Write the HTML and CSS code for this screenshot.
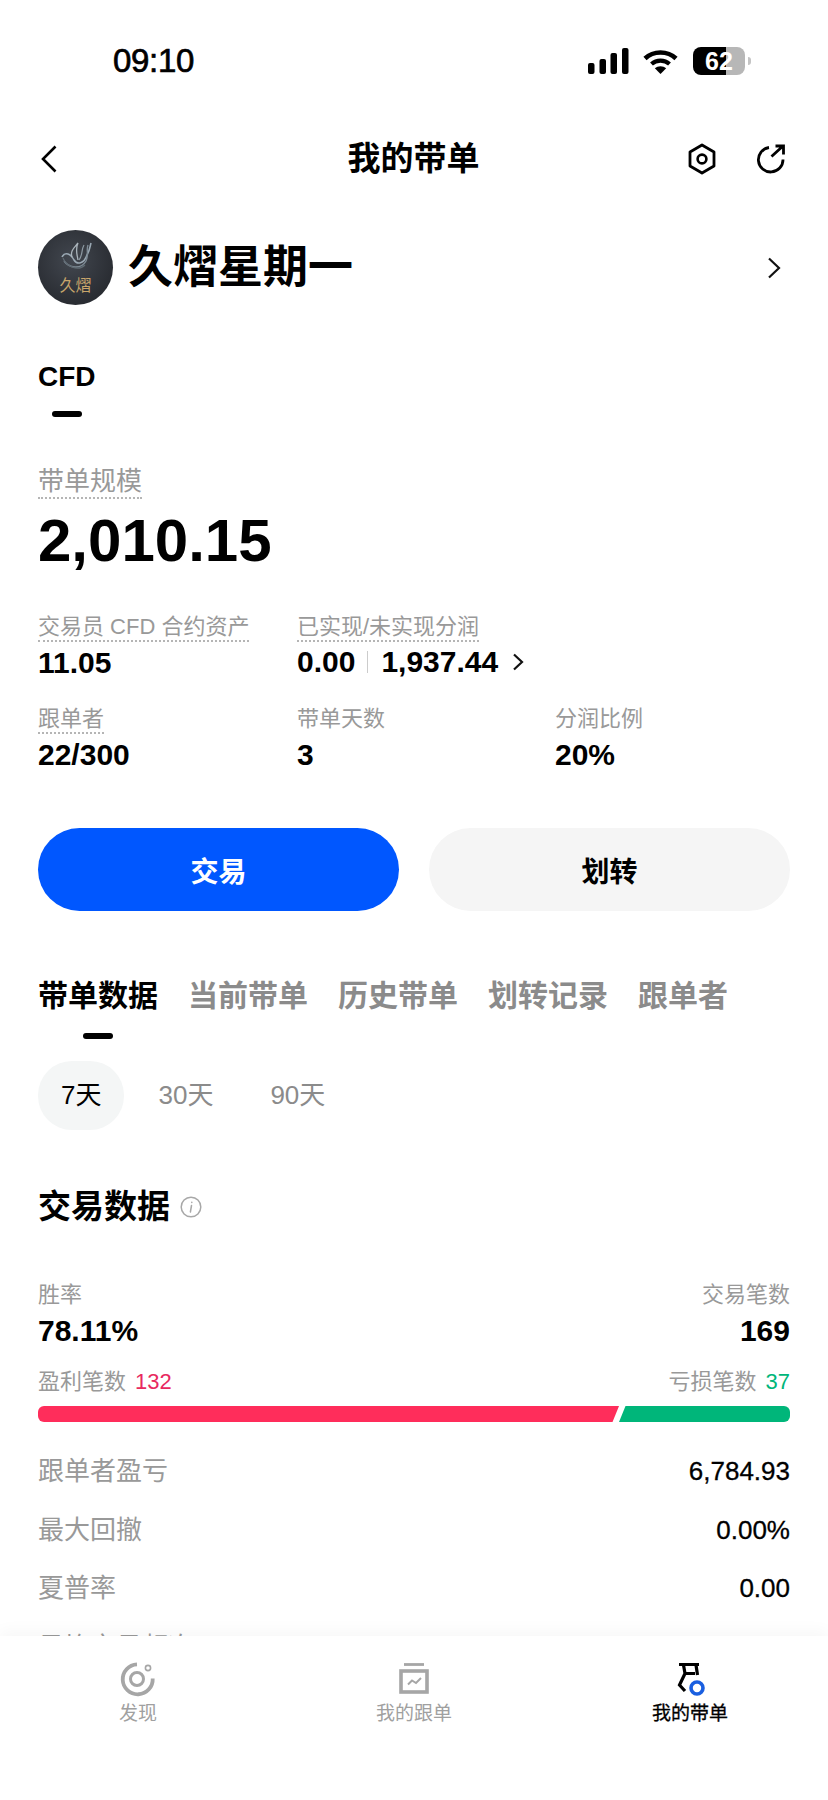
FILE: index.html
```html
<!DOCTYPE html>
<html lang="zh-CN">
<head>
<meta charset="utf-8">
<title>我的带单</title>
<link rel="stylesheet" href="styles.css">
</head>
<body>
<div class="page">
  <header class="status">
    <span class="time">09:10</span>
    <div class="status-icons">
      <svg class="signal" width="41" height="26" viewBox="0 0 41 26"><rect x="0" y="15" width="6.5" height="11" rx="2"/><rect x="11.5" y="11" width="6.5" height="15" rx="2"/><rect x="22.5" y="5" width="6.5" height="21" rx="2"/><rect x="34" y="0" width="6.5" height="26" rx="2"/></svg>
      <svg class="wifi" width="35" height="26" viewBox="0 0 35 26"><path d="M2 10.5C10.500 2.500 24.500 2.500 33 10.500" fill="none" stroke="#000" stroke-width="4.600"/><path d="M8.500 16C13.500 11.500 21.500 11.500 26.500 16" fill="none" stroke="#000" stroke-width="4.200"/><path d="M11.800 20.300C15 17.500 20 17.500 23.200 20.300L17.500 26Z"/></svg>
      <div class="battery"><span class="battery-num">62</span></div>
      <span class="battery-cap"></span>
    </div>
  </header>

  <nav class="nav">
    <svg class="nav-back" width="16" height="28" viewBox="0 0 16 28"><path d="M14.500 1.500L2 14L14.500 26.500" fill="none" stroke="#000" stroke-width="2.600"/></svg>
    <h1 class="nav-title">我的带单</h1>
    <div class="nav-actions">
      <svg width="28" height="32" viewBox="0 0 28 32"><path d="M14 2L26 9V23L14 30L2 23V9Z" fill="none" stroke="#000" stroke-width="2.800" stroke-linejoin="round"/><circle cx="14" cy="16" r="4.400" fill="none" stroke="#000" stroke-width="2.600"/></svg>
      <svg width="30" height="30" viewBox="0 0 30 30"><path d="M13 3.500A12.300 12.300 0 1 0 27 15.500" fill="none" stroke="#000" stroke-width="2.800"/><path d="M15.500 12.500L27 2M19.500 2H27.500V10.500" fill="none" stroke="#000" stroke-width="2.800"/></svg>
    </div>
  </nav>

  <section class="profile">
    <div class="avatar">
      <svg width="34" height="34" viewBox="0 0 34 34"><path d="M3 15C6 9 12 12 15 18C18 23 25 22 28 13C31 8 31 4 32 1" fill="none" stroke="#9aa8b3" stroke-width="1.600"/><path d="M5 19C10 26 22 28 27 19C30 12 27 8 29 3" fill="none" stroke="#7d8a94" stroke-width="1.400"/><path d="M13 15C11 9 15 6 19 1C16 7 18 12 19 18" fill="none" stroke="#aab4bb" stroke-width="1.300"/><path d="M20 18C24 13 22 8 25 3" fill="none" stroke="#8d99a2" stroke-width="1.200"/><path d="M4 16C7 24 19 30 26 23" fill="none" stroke="#5f6a72" stroke-width="1.200"/></svg>
      <span class="avatar-text">久熠</span>
    </div>
    <span class="profile-name">久熠星期一</span>
    <svg class="profile-go" width="14" height="22" viewBox="0 0 14 22"><path d="M2 1.500L12 11L2 20.500" fill="none" stroke="#111" stroke-width="2.200"/></svg>
  </section>

  <div class="type-tab">
    <span class="type-tab-label">CFD</span>
    <span class="indicator"></span>
  </div>

  <section class="scale">
    <span class="scale-label">带单规模</span>
    <div class="scale-value">2,010.15</div>
  </section>

  <section class="metrics">
    <div class="metric">
      <span class="metric-label dotted">交易员 CFD 合约资产</span>
      <span class="metric-value">11.05</span>
    </div>
    <div class="metric">
      <span class="metric-label dotted">已实现/未实现分润</span>
      <span class="metric-value metric-split">0.00<i class="split-line"></i>1,937.44<svg class="split-go" width="12" height="18" viewBox="0 0 12 18"><path d="M2 1.500L10 9L2 16.500" fill="none" stroke="#111" stroke-width="2.200"/></svg></span>
    </div>
    <div class="metric-spacer"></div>
    <div class="metric">
      <span class="metric-label dotted">跟单者</span>
      <span class="metric-value">22/300</span>
    </div>
    <div class="metric">
      <span class="metric-label">带单天数</span>
      <span class="metric-value">3</span>
    </div>
    <div class="metric">
      <span class="metric-label">分润比例</span>
      <span class="metric-value">20%</span>
    </div>
  </section>

  <section class="actions">
    <button class="btn btn-primary">交易</button>
    <button class="btn btn-secondary">划转</button>
  </section>

  <div class="tabs">
    <div class="tab tab-active">带单数据<span class="indicator"></span></div>
    <div class="tab">当前带单</div>
    <div class="tab">历史带单</div>
    <div class="tab">划转记录</div>
    <div class="tab">跟单者</div>
  </div>

  <div class="pills">
    <span class="pill pill-active">7天</span>
    <span class="pill">30天</span>
    <span class="pill">90天</span>
  </div>

  <h2 class="section-title">交易数据
    <svg width="22" height="22" viewBox="0 0 22 22"><circle cx="11" cy="11" r="9.800" fill="none" stroke="#a8a8a8" stroke-width="1.500"/><path d="M11.800 6.200V6.400M11.500 9.500L10.400 16" fill="none" stroke="#a8a8a8" stroke-width="1.500" stroke-linecap="round"/></svg>
  </h2>

  <section class="win">
    <div class="win-col">
      <span class="win-label">胜率</span>
      <span class="win-value">78.11%</span>
    </div>
    <div class="win-col win-right">
      <span class="win-label">交易笔数</span>
      <span class="win-value">169</span>
    </div>
  </section>

  <section class="ratio">
    <div class="ratio-head">
      <span>盈利笔数<b class="num-up">132</b></span>
      <span>亏损笔数<b class="num-down">37</b></span>
    </div>
    <div class="ratio-bar">
      <span class="bar-up"></span>
      <span class="bar-down"></span>
    </div>
  </section>

  <section class="rows">
    <div class="row"><span class="row-label">跟单者盈亏</span><span class="row-value">6,784.93</span></div>
    <div class="row"><span class="row-label">最大回撤</span><span class="row-value">0.00%</span></div>
    <div class="row"><span class="row-label">夏普率</span><span class="row-value">0.00</span></div>
    <div class="row"><span class="row-label">日均交易频次</span><span class="row-value">34.50</span></div>
  </section>

  <footer class="tabbar">
    <div class="tabbar-item">
      <svg width="36" height="36" viewBox="0 0 36 36"><path d="M17 3.300A15 15 0 1 0 32.700 17.500" fill="none" stroke="#a6a6a6" stroke-width="3.800"/><circle cx="17" cy="18" r="6.500" fill="none" stroke="#a6a6a6" stroke-width="3"/><circle cx="28" cy="7" r="2.600" fill="none" stroke="#a6a6a6" stroke-width="1.600"/></svg>
      <span>发现</span>
    </div>
    <div class="tabbar-item">
      <svg width="36" height="36" viewBox="0 0 36 36"><path d="M8 3.500H28" fill="none" stroke="#a6a6a6" stroke-width="2.800"/><rect x="5" y="10" width="26" height="21" fill="none" stroke="#a6a6a6" stroke-width="3.600"/><path d="M12 23.500L16 19.500L20 22L25 17" fill="none" stroke="#a6a6a6" stroke-width="2"/></svg>
      <span>我的跟单</span>
    </div>
    <div class="tabbar-item tabbar-active">
      <svg width="36" height="36" viewBox="0 0 36 36"><path d="M7 3.500H27M11.500 4L13 12.500H23M24 4L25.500 14M13 12.500L7.500 24L13 30" fill="none" stroke="#000" stroke-width="3.200"/><circle cx="25" cy="27" r="6" fill="#fff" stroke="#1a5fe0" stroke-width="3.600"/></svg>
      <span>我的带单</span>
    </div>
  </footer>
</div>
</body>
</html>
```
FILE: styles.css
```css
* { box-sizing: border-box; }
html, body { margin: 0; padding: 0; background: #fff; }
body { font-family: "Liberation Sans", "Noto Sans CJK SC", sans-serif; color: #000; }
.page { position: relative; width: 828px; height: 1800px; overflow: hidden; background: #fff; }

.status { height: 120px; display: flex; justify-content: space-between; align-items: center; padding: 2px 77px 0 113px; }
.time { font-size: 33px; line-height: 40px; font-weight: 400; -webkit-text-stroke: 0.7px #000; letter-spacing: -0.3px; }
.status-icons { display: flex; align-items: center; gap: 14px; }
.status-icons svg { display: block; }
.signal { fill: #000; }
.wifi { fill: #000; margin-left: 0; }
.battery { width: 52px; height: 28px; border-radius: 8px; background: linear-gradient(90deg, #000 0, #000 33px, #b7b7b7 33px, #b7b7b7 100%); display: flex; align-items: center; justify-content: center; margin-left: 1px; }
.battery-num { color: #fff; font-size: 25px; line-height: 28px; font-weight: 700; }
.battery-cap { width: 3px; height: 8px; background: #c4c4c4; border-radius: 0 3px 3px 0; margin-left: -11px; }

.nav { height: 78px; display: grid; grid-template-columns: 1fr auto 1fr; align-items: center; padding: 0 42px 0 41px; }
.nav-back { display: block; }
.nav-title { margin: 0; font-size: 33px; line-height: 40px; font-weight: 700; }
.nav-actions { display: flex; justify-content: flex-end; align-items: center; gap: 40px; }
.nav-actions svg { display: block; }

.profile { display: flex; align-items: center; height: 75px; margin-top: 32px; padding: 0 47px 0 38px; }
.avatar { width: 75px; height: 75px; border-radius: 50%; background: radial-gradient(circle at 45% 40%, #42474f 0, #2a2d33 70%, #24272c 100%); display: flex; flex-direction: column; align-items: center; flex: none; padding-top: 12px; }
.avatar svg { display: block; }
.avatar-text { color: #c9a66b; font-size: 16px; line-height: 17px; margin-top: 1px; }
.profile-name { font-size: 45px; line-height: 54px; font-weight: 700; margin-left: 15px; flex: 1; }
.profile-go { display: block; }

.indicator { display: block; width: 30px; height: 6px; border-radius: 3px; background: #000; }

.type-tab { display: inline-flex; flex-direction: column; align-items: center; margin: 55px 0 0 38px; }
.type-tab-label { font-size: 28px; line-height: 34px; font-weight: 700; }
.type-tab .indicator { margin-top: 17px; }

.scale { margin-top: 48px; padding: 0 38px; }
.scale-label { display: inline-block; color: #999; font-size: 26px; line-height: 32px; border-bottom: 2px dotted #b5b5b5; }
.scale-value { font-size: 60px; line-height: 68px; font-weight: 700; margin-top: 8px; }

.metrics { display: grid; grid-template-columns: 259px 258px 1fr; row-gap: 26px; padding: 0 38px; margin-top: 39px; }
.metric { display: flex; flex-direction: column; align-items: flex-start; }
.metric-label { color: #999; font-size: 22px; line-height: 26px; height: 28px; }
.dotted { border-bottom: 2px dotted #b5b5b5; }
.metric-value { font-size: 30px; line-height: 34px; font-weight: 700; margin-top: 4px; }
.metric-split { display: flex; align-items: center; margin-top: 3px; }
.split-line { display: block; width: 1px; height: 22px; background: #ccc; margin: 0 13px 0 12px; }
.split-go { display: block; margin-left: 14px; }

.actions { display: flex; justify-content: space-between; padding: 0 38px; margin-top: 56px; }
.btn { width: 361px; height: 83px; border: 0; border-radius: 42px; font-family: inherit; font-size: 28px; font-weight: 700; padding: 0; }
.btn-primary { background: #0057ff; color: #fff; }
.btn-secondary { background: #f5f5f5; color: #000; }

.tabs { display: flex; gap: 30px; padding: 0 38px; margin-top: 65px; }
.tab { font-size: 30px; line-height: 40px; font-weight: 700; color: #8b8b8b; position: relative; }
.tab-active { color: #000; }
.tab-active .indicator { position: absolute; left: 45px; top: 57px; }

.pills { display: flex; gap: 11px; padding: 0 38px; margin-top: 45px; }
.pill { height: 69px; padding: 0 23px; border-radius: 34px; font-size: 26px; line-height: 69px; color: #8b8b8b; }
.pill-active { background: #f4f6f6; color: #000; }

.section-title { margin: 57px 0 0; padding: 0 38px; display: flex; align-items: center; gap: 10px; font-size: 33px; line-height: 40px; font-weight: 700; }
.section-title svg { display: block; }

.win { display: flex; justify-content: space-between; padding: 0 38px; margin-top: 54px; }
.win-col { display: flex; flex-direction: column; }
.win-right { align-items: flex-end; }
.win-label { color: #999; font-size: 22px; line-height: 28px; }
.win-value { font-size: 30px; line-height: 34px; font-weight: 700; margin-top: 5px; }

.ratio { padding: 0 38px; margin-top: 20px; }
.ratio-head { display: flex; justify-content: space-between; color: #999; font-size: 22px; line-height: 28px; }
.ratio-head b { font-weight: 400; margin-left: 9px; }
.num-up { color: #e8295f; }
.num-down { color: #00b67a; }
.ratio-bar { display: flex; height: 16px; margin-top: 10px; }
.bar-up { width: 581px; background: #ff2d5b; border-radius: 6px 0 0 6px; clip-path: polygon(0 0, 100% 0, calc(100% - 6.500px) 100%, 0 100%); }
.bar-down { flex: 1; background: #00b67a; border-radius: 0 6px 6px 0; clip-path: polygon(6.500px 0, 100% 0, 100% 100%, 0 100%); }

.rows { padding: 0 38px; margin-top: 20px; }
.row { display: flex; justify-content: space-between; height: 58.500px; align-items: center; }
.row-label { color: #999; font-size: 26px; line-height: 32px; }
.row-value { font-size: 26px; line-height: 32px; -webkit-text-stroke: 0.3px #000; }

.tabbar { position: absolute; left: 0; right: 0; bottom: 0; height: 164px; background: #fff; box-shadow: 0 -6px 14px rgba(0, 0, 0, 0.03); display: grid; grid-template-columns: repeat(3, 1fr); padding-top: 25px; align-content: start; }
.tabbar-item { display: flex; flex-direction: column; align-items: center; color: #a0a0a0; font-size: 19px; line-height: 24px; }
.tabbar-item svg { display: block; margin-bottom: 5px; }
.tabbar-active { color: #000; -webkit-text-stroke: 0.3px #000; }
```
